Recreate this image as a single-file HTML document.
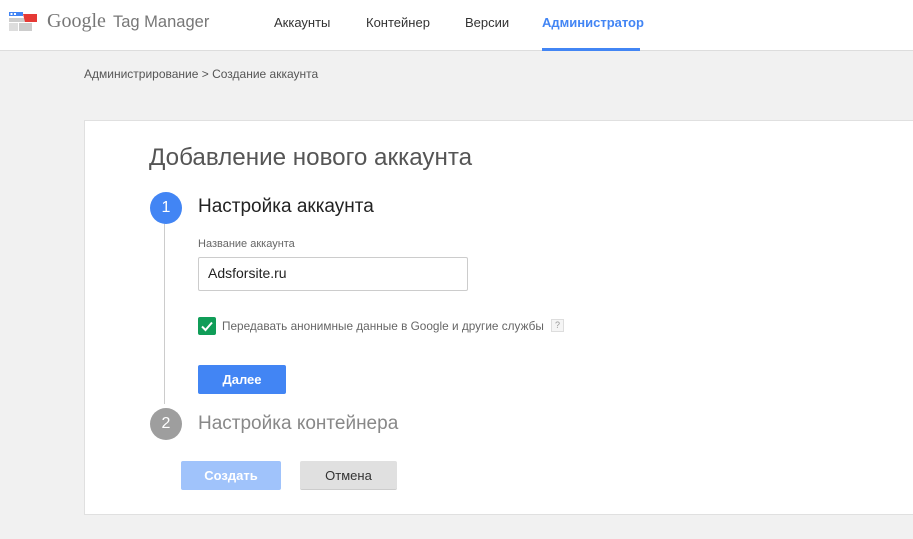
<!DOCTYPE html>
<html><head><meta charset="utf-8"><style>
*{margin:0;padding:0;box-sizing:border-box}
body{width:913px;height:539px;overflow:hidden;background:#f1f1f1;font-family:"Liberation Sans",Arial,sans-serif;position:relative}
.hdr{position:absolute;left:0;top:0;width:913px;height:51px;background:#fff;border-bottom:1px solid #ddd}
.a{position:absolute;white-space:nowrap}
.nav{font-size:13px;color:#333;top:15px}
.card{position:absolute;left:84px;top:120px;width:840px;height:395px;background:#fff;border:1px solid #e0e0e0}
.btn{position:absolute;height:29px;font-size:13px;text-align:center;line-height:29px;border-radius:2px}
</style></head><body>
<div class="hdr">
<svg class="a" style="left:9px;top:10px" width="30" height="22" viewBox="0 0 30 22">
<rect x="0" y="2" width="14" height="4" fill="#4285f4"/>
<rect x="1.5" y="3" width="2" height="2" fill="#fff"/><rect x="5" y="3" width="2" height="2" fill="#fff"/>
<rect x="0" y="8" width="23" height="4" fill="#ccc"/>
<rect x="0" y="13" width="9" height="8" fill="#ddd"/>
<rect x="10" y="13" width="13" height="8" fill="#ccc"/>
<path d="M14 4 L28 4 L28 12 L16 12 Z" fill="#e53935"/>
</svg>
<div class="a" style="left:47px;top:10px;font-size:20px;color:#777;font-family:'Liberation Serif',serif">Google</div>
<div class="a" style="left:113px;top:13px;font-size:16.5px;color:#777">Tag Manager</div>
<div class="a nav" style="left:274px">Аккаунты</div>
<div class="a nav" style="left:366px">Контейнер</div>
<div class="a nav" style="left:465px">Версии</div>
<div class="a nav" style="left:542px;color:#4285f4;font-weight:bold">Администратор</div>
<div class="a" style="left:542px;top:48px;width:98px;height:3px;background:#4285f4"></div>
</div>
<div class="a" style="left:84px;top:67px;font-size:12px;color:#555">Администрирование &gt; Создание аккаунта</div>
<div class="card"></div>
<div class="a" style="left:149px;top:144px;font-size:24.2px;color:#555">Добавление нового аккаунта</div>
<div class="a" style="left:164px;top:222px;width:1px;height:182px;background:#ccc"></div>
<div class="a" style="left:150px;top:192px;width:32px;height:32px;border-radius:50%;background:#4285f4;color:#fff;font-size:16px;text-align:center;line-height:32px">1</div>
<div class="a" style="left:198px;top:196px;font-size:19px;color:#222">Настройка аккаунта</div>
<div class="a" style="left:198px;top:238px;font-size:11px;color:#666">Название аккаунта</div>
<div class="a" style="left:198px;top:257px;width:270px;height:34px;border:1px solid #ccc;border-radius:2px;font-size:14px;color:#222;padding:7px 9px">Adsforsite.ru</div>
<div class="a" style="left:198px;top:317px;width:18px;height:18px;background:#109d58;border-radius:2px"><svg width="18" height="18"><path d="M4 9.5 L7.5 13 L14 5.5" stroke="#fff" stroke-width="2" fill="none"/></svg></div>
<div class="a" style="left:222px;top:319px;font-size:11.8px;color:#666">Передавать анонимные данные в Google и другие службы</div>
<div class="a" style="left:551px;top:319px;width:13px;height:13px;border:1px solid #ddd;background:#f5f5f5;font-size:9px;color:#999;text-align:center;line-height:11px">?</div>
<div class="btn a" style="left:198px;top:365px;width:88px;background:#4285f4;color:#fff;font-weight:bold">Далее</div>
<div class="a" style="left:150px;top:408px;width:32px;height:32px;border-radius:50%;background:#9e9e9e;color:#fff;font-size:16px;text-align:center;line-height:32px">2</div>
<div class="a" style="left:198px;top:413px;font-size:19px;color:#888">Настройка контейнера</div>
<div class="btn a" style="left:181px;top:461px;width:100px;background:#a0c3fb;color:#fff;font-weight:bold">Создать</div>
<div class="btn a" style="left:300px;top:461px;width:97px;background:#e0e0e0;color:#333;border-bottom:1px solid #ccc">Отмена</div>
</body></html>
